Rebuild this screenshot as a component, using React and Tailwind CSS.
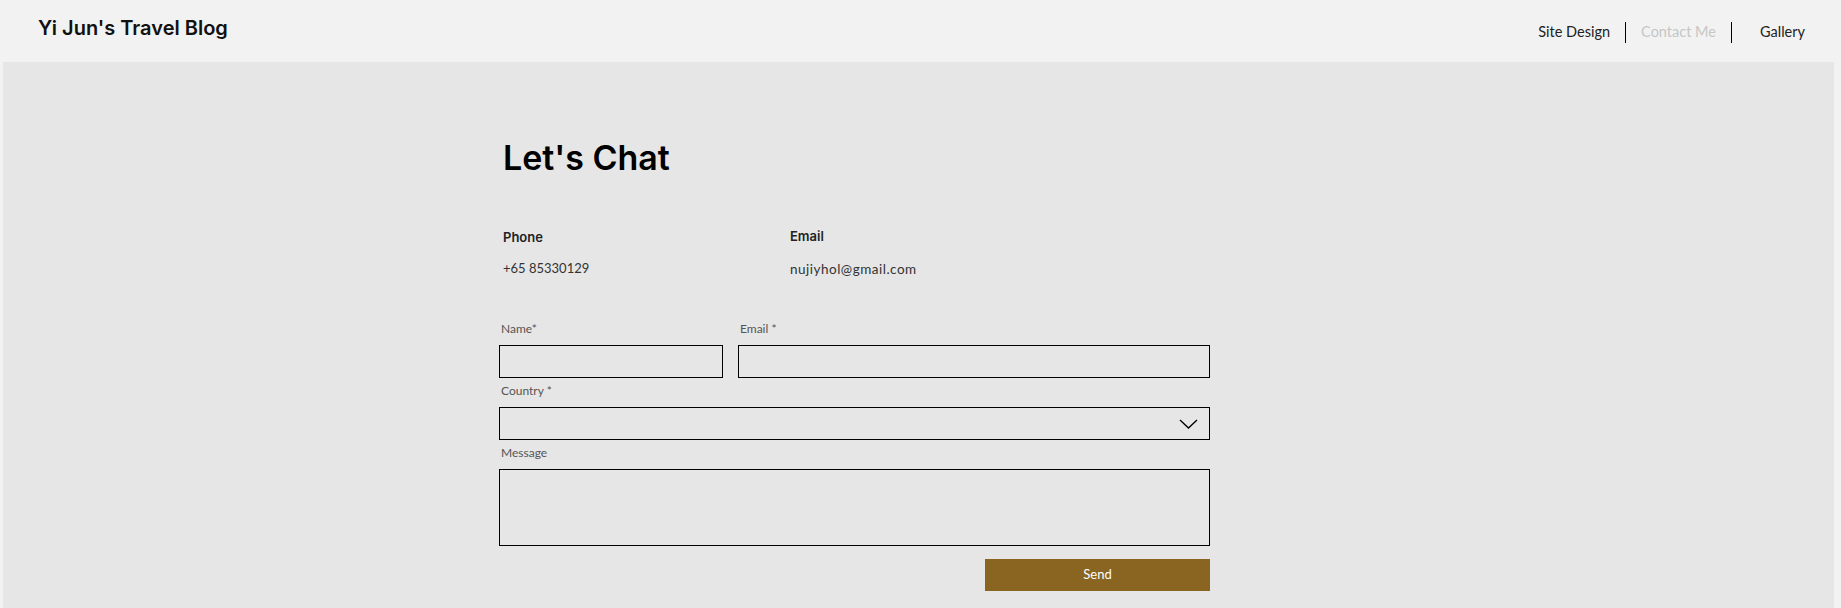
import {useState} from "react";

const Field = ({label, children}) => (
    <div className="flex flex-col">
        <label className="text-[12px] leading-[14px] text-[#555] mb-[9px] pl-[2px]" style={{fontFamily: '"Lato", sans-serif'}}>{label}</label>
        {children}
    </div>
);

const App = () => {
    const [form, setForm] = useState({name: '', email: '', country: '', message: ''});
    const set = (k) => (e) => setForm({...form, [k]: e.target.value});

    return (
        <div className="min-h-screen bg-[#f2f2f2] text-black" style={{fontFamily: '"Lato", sans-serif'}}>
            <header className="h-[62px] flex items-center justify-between pl-[38px] pr-[36px]">
                <h1 className="text-[20px] font-semibold text-[#111] -mt-[7px]" style={{fontFamily: '"Inter", sans-serif'}}>
                    Yi Jun's Travel Blog
                </h1>
                <nav className="flex items-center text-[14.5px] text-[#222] mt-[2px]">
                    <a className="pr-[15px]">Site Design</a>
                    <span className="w-px h-[21px] bg-black"></span>
                    <a className="px-[15px] text-[#c6c6c6]">Contact Me</a>
                    <span className="w-px h-[21px] bg-black"></span>
                    <a className="pl-[28px]">Gallery</a>
                </nav>
            </header>

            <main className="ml-[3px] mr-[7px] bg-[#e6e6e6] h-[546px] pl-[496px] pt-[74px]">
                <div className="w-[711px]">
                    <h2 className="text-[34px] leading-[44px] font-semibold pl-[4px]" style={{fontFamily: '"Inter", sans-serif'}}>Let's Chat</h2>

                    <div className="flex mt-[48px] pl-[4px]">
                        <div className="w-[287px]">
                            <div className="text-[13px] font-semibold text-[#222]" style={{fontFamily: '"Inter", sans-serif'}}>Phone</div>
                            <div className="text-[13px] text-[#333] mt-[11px]">+65 85330129</div>
                        </div>
                        <div>
                            <div className="text-[13px] font-semibold text-[#222] -mt-[1px]" style={{fontFamily: '"Inter", sans-serif'}}>Email</div>
                            <div className="text-[13.5px] tracking-[0.5px] text-[#333] mt-[12px]">nujiyhol@gmail.com</div>
                        </div>
                    </div>

                    <form className="mt-[43px] flex flex-col gap-[6px]" onSubmit={(e) => e.preventDefault()}>
                        <div className="grid grid-cols-[224px_472px] gap-[15px]">
                            <Field label="Name*">
                                <input value={form.name} onChange={set('name')}
                                       className="h-[33px] border border-black bg-transparent px-2 outline-none" />
                            </Field>
                            <Field label="Email *">
                                <input value={form.email} onChange={set('email')}
                                       className="h-[33px] border border-black bg-transparent px-2 outline-none" />
                            </Field>
                        </div>
                        <Field label="Country *">
                            <div className="relative h-[33px] border border-black">
                                <select value={form.country} onChange={set('country')}
                                        className="w-full h-full appearance-none bg-transparent px-2 outline-none">
                                    <option value=""></option>
                                </select>
                                <svg className="absolute right-[11px] top-[11px] pointer-events-none" width="19" height="10" viewBox="0 0 19 10" fill="none">
                                    <path d="M1 1 L9.5 9 L18 1" stroke="black" strokeWidth="1.4" />
                                </svg>
                            </div>
                        </Field>
                        <Field label="Message">
                            <textarea value={form.message} onChange={set('message')}
                                      className="h-[77px] border border-black bg-transparent px-2 resize-none outline-none" />
                        </Field>
                        <div className="flex justify-end mt-[7px]">
                            <button type="submit" className="w-[225px] h-[32px] bg-[#8a6521] text-white text-[13px]">
                                Send
                            </button>
                        </div>
                    </form>
                </div>
            </main>
        </div>
    );
};
export default App;
